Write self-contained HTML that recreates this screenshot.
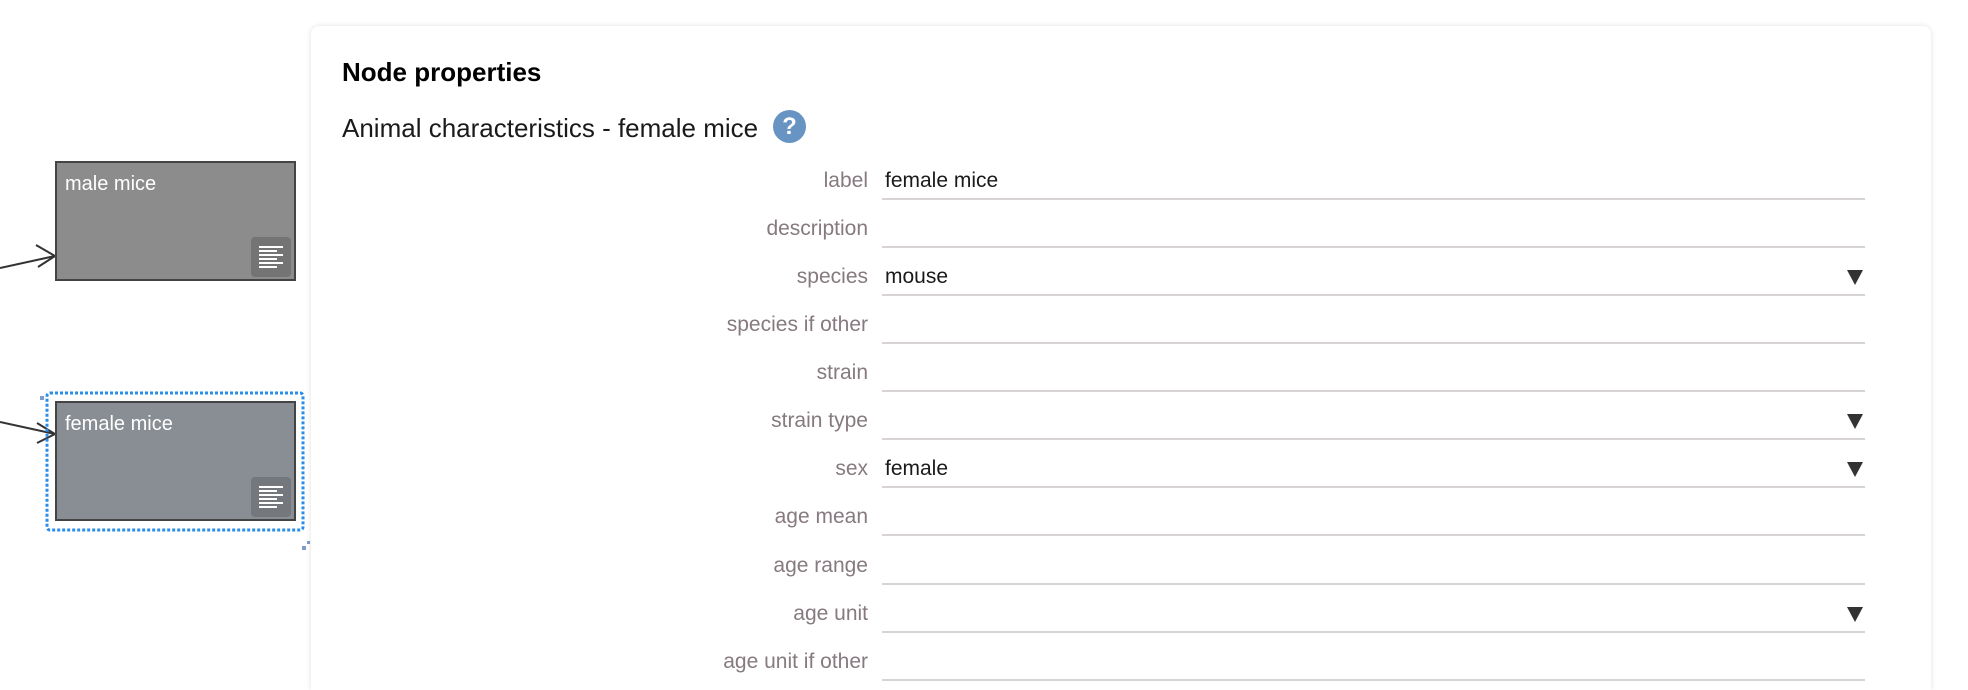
<!DOCTYPE html>
<html><head><meta charset="utf-8"><style>
html,body{margin:0;padding:0;width:1968px;height:690px;overflow:hidden;background:#fff;font-family:"Liberation Sans",sans-serif;position:relative}
.panel{position:absolute;left:311px;top:26px;width:1620px;height:664px;background:#fff;border-radius:8px 8px 0 0;box-shadow:0 0 6px rgba(0,0,0,0.12)}
.title{position:absolute;left:342px;top:57px;font-size:26px;font-weight:bold;color:#000;line-height:30px}
.sub{position:absolute;left:342px;top:113px;font-size:26px;color:#1a1a1a;line-height:30px}
.help{position:absolute;left:773px;top:110px;width:33px;height:33px;border-radius:50%;background:#6894c4;color:#fff;font-weight:bold;font-size:24px;text-align:center;line-height:33px}
.row{position:absolute;left:0;width:1968px;height:48px}
.lab{position:absolute;right:1100px;top:0;font-size:21px;color:#867a80;line-height:24px;white-space:nowrap}
.val{position:absolute;left:885px;top:0;font-size:21px;color:#1a1a1a;line-height:24px}
.line{position:absolute;left:882px;width:983px;height:2px;background:#d8d4d6;top:29px}
.arr{position:absolute;left:1847px;top:5px;width:0;height:0;border-left:8px solid transparent;border-right:8px solid transparent;border-top:15px solid #333}
.node{position:absolute;left:55px;width:237px;height:116px;border:2px solid #444;}
.node .t{position:absolute;left:8px;top:10px;color:#fff;font-size:20px}
.node .ic{position:absolute;left:194px;top:74px;width:40px;height:40px;border-radius:4px;background:#74777c}
.ic i{position:absolute;left:8px;height:2px;background:#fff}
</style></head><body>
<svg style="position:absolute;left:0;top:0" width="320" height="690">
<line x1="0" y1="268" x2="55" y2="256" stroke="#333" stroke-width="2"/>
<polyline points="36,245 55,256 38,267" fill="none" stroke="#333" stroke-width="2"/>
<line x1="0" y1="422" x2="55" y2="434" stroke="#333" stroke-width="2"/>
<polyline points="37,423 55,434 37,443" fill="none" stroke="#333" stroke-width="2"/>
<rect x="47" y="393" width="256" height="137" fill="none" stroke="#2a8ee8" stroke-width="3" stroke-dasharray="3,2" rx="3"/>
<rect x="40" y="396" width="4" height="4" fill="#7b9ccc"/><rect x="302" y="546" width="4" height="4" fill="#7b9ccc"/><rect x="307" y="541" width="3" height="3" fill="#7b9ccc"/>
</svg>
<div class="node" style="top:161px;background:#8c8c8c"><div class="t">male mice</div><div class="ic" style="background:#747474"><i style="top:9px;width:24px"></i><i style="top:13px;width:18px"></i><i style="top:17px;width:24px"></i><i style="top:21px;width:18px"></i><i style="top:25px;width:24px"></i><i style="top:29px;width:18px"></i></div></div>
<div class="node" style="top:401px;background:#898d94"><div class="t">female mice</div><div class="ic"><i style="top:9px;width:24px"></i><i style="top:13px;width:18px"></i><i style="top:17px;width:24px"></i><i style="top:21px;width:18px"></i><i style="top:25px;width:24px"></i><i style="top:29px;width:18px"></i></div></div>
<div class="panel"></div>
<div class="title">Node properties</div>
<div class="sub">Animal characteristics - female mice</div>
<div class="help">?</div>
<div class="row" style="top:169px"><div class="lab">label</div><div class="val">female mice</div><div class="line"></div></div>
<div class="row" style="top:217px"><div class="lab">description</div><div class="line"></div></div>
<div class="row" style="top:265px"><div class="lab">species</div><div class="val">mouse</div><div class="arr"></div><div class="line"></div></div>
<div class="row" style="top:313px"><div class="lab">species if other</div><div class="line"></div></div>
<div class="row" style="top:361px"><div class="lab">strain</div><div class="line"></div></div>
<div class="row" style="top:409px"><div class="lab">strain type</div><div class="arr"></div><div class="line"></div></div>
<div class="row" style="top:457px"><div class="lab">sex</div><div class="val">female</div><div class="arr"></div><div class="line"></div></div>
<div class="row" style="top:505px"><div class="lab">age mean</div><div class="line"></div></div>
<div class="row" style="top:554px"><div class="lab">age range</div><div class="line"></div></div>
<div class="row" style="top:602px"><div class="lab">age unit</div><div class="arr"></div><div class="line"></div></div>
<div class="row" style="top:650px"><div class="lab">age unit if other</div><div class="line"></div></div>
</body></html>
